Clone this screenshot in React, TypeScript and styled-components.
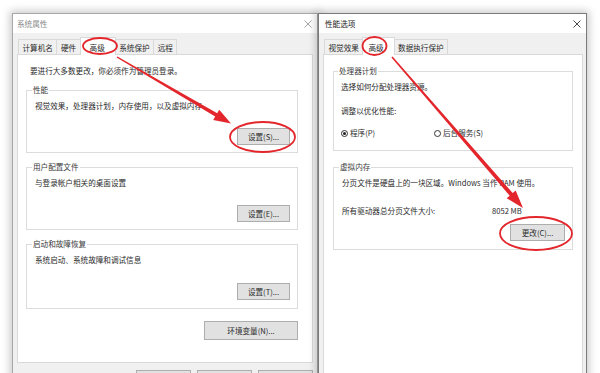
import React from "react";
import styled, { createGlobalStyle } from "styled-components";

const GlobalStyle = createGlobalStyle`
  html, body { margin: 0; padding: 0; background: #fff; }
  body { font-family: "Noto Sans CJK SC", "Noto Sans", sans-serif; }
`;

const Page = styled.div`
  position: relative;
  width: 600px;
  height: 373px;
  overflow: hidden;
  background: #fff;
  display: flex;
  align-items: flex-start;
  padding: 13px 0 0 12px;
  box-sizing: border-box;
  font-size: 7.6px;
  color: #2a2a2a;
`;

const Window = styled.div<{ $w: number; $active?: boolean }>`
  position: relative;
  z-index: ${(p) => (p.$active ? 2 : 1)};
  flex: none;
  width: ${(p) => p.$w}px;
  height: 385px;
  box-sizing: border-box;
  border: 1px solid ${(p) => (p.$active ? "#7a7a7a" : "#a8a8a8")};
  background: #f0f0f0;
  box-shadow: 0 0 8px 2px rgba(0, 0, 0, 0.22);
  display: flex;
  flex-direction: column;
`;

const TitleBar = styled.div<{ $active?: boolean }>`
  height: 19px;
  flex: none;
  background: #fff;
  display: flex;
  align-items: center;
  justify-content: space-between;
  padding: 0 5px 0 ${(p) => (p.$active ? 6 : 4)}px;
  color: ${(p) => (p.$active ? "#222" : "#8a8a8a")};
  line-height: 12px;
`;

const Body = styled.div<{ $pr: number }>`
  flex: 1;
  display: flex;
  flex-direction: column;
  padding: 4px ${(p) => p.$pr}px 10px 4px;
  min-height: 0;
`;

const TabStrip = styled.div`
  display: flex;
  align-items: flex-end;
  height: 18px;
  padding-left: 1px;
  margin-bottom: -1px;
  position: relative;
  z-index: 1;
  flex: none;
`;

const Tab = styled.div<{ $active?: boolean; $pl?: number }>`
  height: ${(p) => (p.$active ? 18 : 16)}px;
  box-sizing: border-box;
  display: flex;
  align-items: center;
  padding: ${(p) => (p.$active ? `1px 10px 0 ${p.$pl ?? 9}px` : "0 3.5px")};
  border: 1px solid #d9d9d9;
  border-bottom: ${(p) => (p.$active ? "none" : "1px solid #d9d9d9")};
  background: ${(p) => (p.$active ? "#fff" : "#f0f0f0")};
  margin-left: -1px;
  white-space: nowrap;
  &:first-child { margin-left: 0; }
`;

const Panel = styled.div<{ $pl: number; $pr: number }>`
  flex: 1;
  background: #fff;
  border: 1px solid #d9d9d9;
  padding: 10px ${(p) => p.$pr}px 0 ${(p) => p.$pl}px;
  display: flex;
  flex-direction: column;
  min-height: 0;
`;

const Line = styled.div<{ $mt?: number; $ml?: number }>`
  line-height: 12px;
  white-space: nowrap;
  margin-top: ${(p) => p.$mt ?? 0}px;
  margin-left: ${(p) => p.$ml ?? 0}px;
`;

const Group = styled.fieldset<{ $mt?: number; $pb?: number; $pl?: number }>`
  margin: ${(p) => p.$mt ?? 0}px 0 0 0;
  padding: 4px 7px ${(p) => p.$pb ?? 7}px ${(p) => p.$pl ?? 8}px;
  border: 1px solid #dcdcdc;
  min-width: 0;
`;

const Legend = styled.legend`
  padding: 0 1px;
  margin-left: -3px;
  line-height: 12px;
  color: #3a3a3a;
`;

const ButtonRow = styled.div<{ $mt: number }>`
  display: flex;
  justify-content: flex-end;
  gap: 6px;
  margin-top: ${(p) => p.$mt}px;
`;

const Button = styled.div<{ $w: number; $h?: number }>`
  width: ${(p) => p.$w}px;
  height: ${(p) => p.$h ?? 17}px;
  box-sizing: border-box;
  border: 1px solid #adadad;
  background: #e1e1e1;
  display: flex;
  align-items: center;
  justify-content: center;
  white-space: nowrap;
  flex: none;
`;

const RadioRow = styled.div`
  display: flex;
  align-items: center;
  margin-top: 10px;
  line-height: 12px;
`;

const RadioItem = styled.label<{ $w?: number }>`
  display: flex;
  align-items: center;
  gap: 2px;
  width: ${(p) => (p.$w ? `${p.$w}px` : "auto")};
`;

const RadioDot = styled.span<{ $on?: boolean }>`
  width: 7px;
  height: 7px;
  box-sizing: border-box;
  border-radius: 50%;
  border: 1px solid #333;
  display: flex;
  align-items: center;
  justify-content: center;
  &::after {
    content: "";
    width: 3px;
    height: 3px;
    border-radius: 50%;
    background: ${(p) => (p.$on ? "#222" : "transparent")};
  }
`;

const ValueRow = styled.div`
  display: flex;
  line-height: 12px;
  margin-top: 16px;
`;

const ValueLabel = styled.span`
  width: 150px;
  flex: none;
`;

const Overlay = styled.svg`
  position: absolute;
  left: 0;
  top: 0;
  width: 600px;
  height: 373px;
  z-index: 10;
  pointer-events: none;
`;

function CloseIcon({ color }: { color: string }) {
  return (
    <svg width="8" height="8" viewBox="0 0 8 8">
      <path d="M0.5 0.5 L7.5 7.5 M7.5 0.5 L0.5 7.5" stroke={color} strokeWidth="0.9" />
    </svg>
  );
}

const RED = "#e3262c";

export default function App() {
  return (
    <>
      <GlobalStyle />
      <Page>
        <Window $w={306}>
          <TitleBar>
            <span>系统属性</span>
            <CloseIcon color="#999" />
          </TitleBar>
          <Body $pr={4}>
            <TabStrip>
              <Tab>计算机名</Tab>
              <Tab>硬件</Tab>
              <Tab $active>高级</Tab>
              <Tab>系统保护</Tab>
              <Tab>远程</Tab>
            </TabStrip>
            <Panel $pl={8} $pr={14}>
              <Line $ml={4}>要进行大多数更改，你必须作为管理员登录。</Line>
              <Group $mt={7}>
                <Legend>性能</Legend>
                <Line>视觉效果，处理器计划，内存使用，以及虚拟内存</Line>
                <ButtonRow $mt={16}>
                  <Button $w={53}>设置(S)...</Button>
                </ButtonRow>
              </Group>
              <Group $mt={8}>
                <Legend>用户配置文件</Legend>
                <Line>与登录帐户相关的桌面设置</Line>
                <ButtonRow $mt={16}>
                  <Button $w={53}>设置(E)...</Button>
                </ButtonRow>
              </Group>
              <Group $mt={8} $pb={8}>
                <Legend>启动和故障恢复</Legend>
                <Line>系统启动、系统故障和调试信息</Line>
                <ButtonRow $mt={17}>
                  <Button $w={53}>设置(T)...</Button>
                </ButtonRow>
              </Group>
              <ButtonRow $mt={12}>
                <Button $w={94} $h={19}>环境变量(N)...</Button>
              </ButtonRow>
            </Panel>
            <ButtonRow $mt={7}>
              <Button $w={55} />
              <Button $w={55} />
              <Button $w={55} />
            </ButtonRow>
          </Body>
        </Window>

        <Window $w={269} $active>
          <TitleBar $active>
            <span>性能选项</span>
            <CloseIcon color="#333" />
          </TitleBar>
          <Body $pr={3}>
            <TabStrip>
              <Tab>视觉效果</Tab>
              <Tab $active $pl={5}>高级</Tab>
              <Tab>数据执行保护</Tab>
            </TabStrip>
            <Panel $pl={9} $pr={9}>
              <Group $pl={7} $pb={11}>
                <Legend>处理器计划</Legend>
                <Line>选择如何分配处理器资源。</Line>
                <Line $mt={12}>调整以优化性能:</Line>
                <RadioRow>
                  <RadioItem $w={93}>
                    <RadioDot $on />
                    程序(P)
                  </RadioItem>
                  <RadioItem>
                    <RadioDot />
                    后台服务(S)
                  </RadioItem>
                </RadioRow>
              </Group>
              <Group $mt={10} $pl={8} $pb={8}>
                <Legend>虚拟内存</Legend>
                <Line>分页文件是硬盘上的一块区域。Windows 当作 RAM 使用。</Line>
                <ValueRow>
                  <ValueLabel>所有驱动器总分页文件大小:</ValueLabel>
                  <span>8052 MB</span>
                </ValueRow>
                <ButtonRow $mt={7}>
                  <Button $w={55}>更改(C)...</Button>
                </ButtonRow>
              </Group>
            </Panel>
          </Body>
        </Window>

        <Overlay viewBox="0 0 600 373">
          <g fill="none" stroke={RED} strokeWidth="1.8">
            <ellipse cx="100" cy="46" rx="17" ry="8" />
            <ellipse cx="262.5" cy="137" rx="32.5" ry="15" />
            <ellipse cx="374.5" cy="46" rx="12" ry="9" />
            <ellipse cx="536" cy="233.5" rx="36" ry="16.5" />
          </g>
          <g fill={RED}>
            <polygon points="116.6,57.6 215.2,116.6 213.2,120.1 231,123.5 219.2,109.7 217.2,113.2 117.4,56.4" />
            <polygon points="391.4,57.5 509.7,195.7 506.7,198.3 523,208 515.7,190.5 512.7,193.1 392.6,56.5" />
          </g>
        </Overlay>
      </Page>
    </>
  );
}
